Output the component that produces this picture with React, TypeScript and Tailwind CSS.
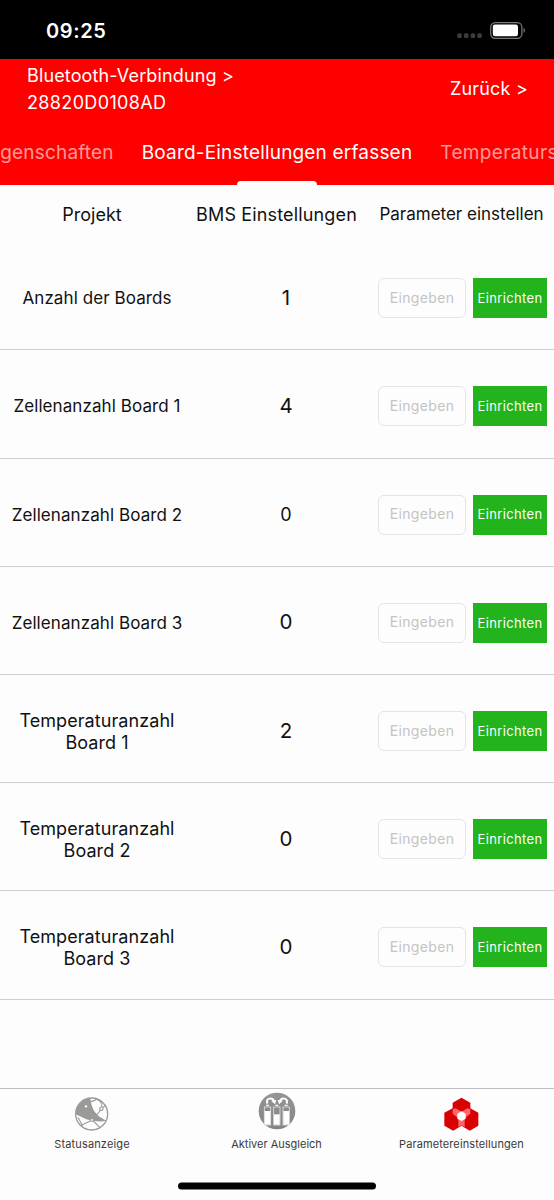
const rows = [
  { lines: ['Anzahl der Boards'], value: '1', small: false },
  { lines: ['Zellenanzahl Board 1'], value: '4', small: false },
  { lines: ['Zellenanzahl Board 2'], value: '0', small: true },
  { lines: ['Zellenanzahl Board 3'], value: '0', small: false },
  { lines: ['Temperaturanzahl', 'Board 1'], value: '2', small: false },
  { lines: ['Temperaturanzahl', 'Board 2'], value: '0', small: false },
  { lines: ['Temperaturanzahl', 'Board 3'], value: '0', small: false },
];

function StatusBar() {
  return (
    <div className="flex h-[59px] shrink-0 items-center justify-between bg-black pt-0.5 pl-[46px] pr-[28px] text-white">
      <span className="text-[20px] font-semibold leading-6 tracking-[0.6px]">09:25</span>
      <div className="flex items-center gap-2">
        <svg width="25" height="6" viewBox="0 0 25 6" className="mt-[11px]" fill="#3c3c3c">
          <rect x="0.2" y="0.3" width="4.6" height="4.8" rx="1.6" />
          <rect x="6.9" y="0.3" width="4.6" height="4.8" rx="1.6" />
          <rect x="13.6" y="0.3" width="4.6" height="4.8" rx="1.6" />
          <rect x="20.3" y="0.3" width="4.6" height="4.8" rx="1.6" />
        </svg>
        <svg width="36" height="17" viewBox="0 0 36 17">
          <rect x="0.7" y="0.7" width="31.2" height="15.6" rx="4.6" fill="none" stroke="#7d7d7d" strokeWidth="1.2" />
          <rect x="2.8" y="2.6" width="25.2" height="11.6" rx="2.2" fill="#fff" />
          <path d="M33.6 5.8c1.6.8 1.6 4.4 0 5.2z" fill="#8a8a8a" />
        </svg>
      </div>
    </div>
  );
}

function StatusIcon() {
  return (
    <svg width="40" height="40" viewBox="0 0 120 120" fill="none">
      <circle cx="59" cy="60" r="48" stroke="#9a9a98" strokeWidth="4" />
      <path d="M11 61C10 34 27 14 54 13c4 9 3 18 7 27 7 18 21 31 43 40-14 3-32 3-49-1C39 76 24 66 11 61z" fill="#9a9a98" />
      <circle cx="42" cy="37" r="3.500" fill="#fff" />
      <circle cx="60" cy="78" r="4.500" fill="#fff" stroke="#9a9a98" strokeWidth="3" />
      <circle cx="88" cy="44" r="5" fill="#fff" stroke="#9a9a98" strokeWidth="3.500" />
      <path d="M56 22c8 1 14-2 18-9M72 16c14 5 20 13 17 23M85 49l-11 14M92 41l10-8M56 80L28 94M18 70l14 26M64 81l20 20" stroke="#9a9a98" strokeWidth="3.300" />
    </svg>
  );
}

function BalanceIcon() {
  return (
    <svg width="42" height="42" viewBox="0 0 126 126" fill="none">
      <defs>
        <linearGradient id="disc" x1="0" y1="0" x2="0" y2="1">
          <stop offset="0" stopColor="#949494" />
          <stop offset="1" stopColor="#848484" />
        </linearGradient>
      </defs>
      <circle cx="63" cy="63" r="55" fill="url(#disc)" />
      {[25, 53, 81].map((x, i) => (
        <g key={x}>
          <path d={`M${x + 5} 46h9`} stroke="#eee" strokeWidth="4" />
          <rect x={x} y="51" width="19" height="54" fill="#8b8b8b" stroke="#e6e6e6" strokeWidth="2.500" />
          <rect x={x + 1} y={i === 1 ? 73 : 63} width="17" height={i === 1 ? 31 : 41} fill="#fff" />
        </g>
      ))}
      <path d="M34 41C28 22 50 22 54 34M92 41C98 22 76 22 72 34" stroke="#fff" strokeWidth="6" />
      <path d="M46 33l15-3-4 13zM80 33l-15-3 4 13z" fill="#fff" />
    </svg>
  );
}

function ParameterIcon() {
  return (
    <svg width="40" height="40" viewBox="0 0 120 120">
      <g fill="#d90000">
        <path d="M58.500 5L85 20.500v31L58.500 67 32 51.500v-31z" />
        <path d="M33.500 36L59 50.500V89l-25.500 15L7 89V50.500z" />
        <path d="M83.500 36L109 50.500V89l-25.500 15L58 89V50.500z" />
      </g>
      <path d="M32 40l9-3 17.500 10L76 37l9 3v13L68 67v26l-9.500-5-9.500 5V67L32 53z" fill="#ff6669" />
      <path d="M58.500 46L71 53v15l-12.500 7L46 68V53z" fill="#fff" />
    </svg>
  );
}

export default function App() {
  return (
    <div className="flex h-[1200px] w-[554px] flex-col overflow-hidden bg-[#fdfdfd] font-['Inter',sans-serif] text-[#111]">
      <StatusBar />
      <header className="flex h-[126px] shrink-0 flex-col bg-[#ff0000] text-white">
        <div className="flex h-[60px] items-center justify-between pl-[27px] pr-[26px] text-[18px]">
          <div className="leading-[27px]">
            <div className="tracking-[0.14px]">Bluetooth-Verbindung &gt;</div>
            <div className="tracking-[0.35px]">28820D0108AD</div>
          </div>
          <div className="pb-px tracking-[0.2px]">Zurück &gt;</div>
        </div>
        <nav className="flex h-[66px] justify-center gap-[28px] whitespace-nowrap text-[19px] tracking-[0.18px]">
          <span className="flex w-[200px] shrink-0 justify-end pt-[20px] text-white/60">Eigenschaften</span>
          <div className="flex shrink-0 flex-col items-center justify-between pt-[20px]">
            <span>Board-Einstellungen erfassen</span>
            <span className="h-1 w-[80px] rounded-t-sm bg-white" />
          </div>
          <span className="w-[200px] shrink-0 pt-[20px] tracking-[0.35px] text-white/60">Temperatursensoren</span>
        </nav>
      </header>

      <main className="flex-1">
        <div className="flex h-[57.2px] items-center whitespace-nowrap pt-[1.5px] text-[18px]">
          <div className="w-[184px] text-center">Projekt</div>
          <div className="w-[185px] text-center tracking-[0.15px]">BMS Einstellungen</div>
          <div className="w-[185px] pt-px text-center text-[17px]">Parameter einstellen</div>
        </div>
        {rows.map((row) => (
          <div key={row.lines.join(' ')} className="flex h-[108.2px] items-center border-b border-[#cfcfcf] pt-[5px]">
            <div
              className={
                row.lines.length > 1
                  ? 'w-[194px] pt-px text-center text-[18px] leading-[22px] tracking-[0.07px]'
                  : 'w-[194px] text-center text-[17px] leading-[22px] tracking-[0.08px]'
              }
            >
              {row.lines.map((line) => (
                <div key={line}>{line}</div>
              ))}
            </div>
            <div className={row.small ? 'w-[184px] text-center text-[18px]' : 'w-[184px] text-center text-[20.5px]'}>{row.value}</div>
            <input
              placeholder="Eingeben"
              className="mr-[7px] h-[40px] w-[88px] rounded-[6px] border border-[#e4e4e4] bg-transparent px-0 pb-[2px] text-center text-[14px] tracking-[0.35px] placeholder:text-[#c4c4c4]"
            />
            <button className="h-[40px] w-[74px] bg-[#23b31c] pt-px text-[13px] tracking-[0.35px] text-white">Einrichten</button>
          </div>
        ))}
      </main>

      <footer className="flex h-[112px] shrink-0 flex-col border-t border-[#bdbdbd]">
        <div className="flex h-[94px] text-[11px] text-[#3a3a3a]">
          <div className="flex w-[184px] flex-col items-center">
            <div className="flex h-[47px] items-start pt-[5px]"><StatusIcon /></div>
            <span className="tracking-[0.15px]">Statusanzeige</span>
          </div>
          <div className="flex w-[185px] flex-col items-center">
            <div className="flex h-[47px] items-start pt-px"><BalanceIcon /></div>
            <span>Aktiver Ausgleich</span>
          </div>
          <div className="flex w-[185px] flex-col items-center">
            <div className="flex h-[47px] items-start pt-[7px]"><ParameterIcon /></div>
            <span className="tracking-[0.1px]">Parametereinstellungen</span>
          </div>
        </div>
        <div className="mx-auto h-[7px] w-[198px] -translate-y-[0.5px] rounded-full bg-black" />
      </footer>
    </div>
  );
}
